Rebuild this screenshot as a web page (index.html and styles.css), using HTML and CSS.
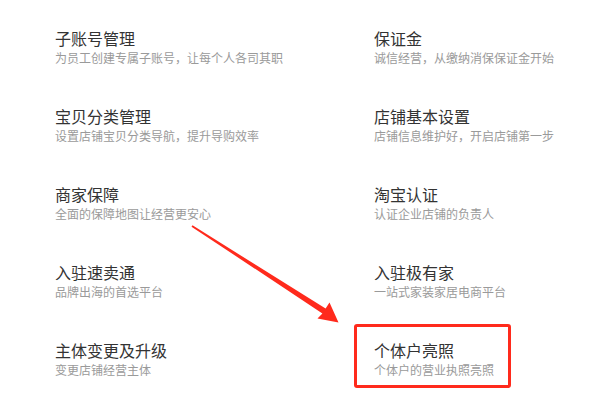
FILE: index.html
```html
<!DOCTYPE html>
<html lang="zh-CN">
<head>
<meta charset="utf-8">
<title>店铺服务</title>
<link rel="stylesheet" href="styles.css">
</head>
<body>
<div class="page">
  <div class="grid">
    <div class="item"><div class="title">子账号管理</div><div class="desc">为员工创建专属子账号，让每个人各司其职</div></div>
    <div class="item"><div class="title">保证金</div><div class="desc">诚信经营，从缴纳消保保证金开始</div></div>
    <div class="item"><div class="title">宝贝分类管理</div><div class="desc">设置店铺宝贝分类导航，提升导购效率</div></div>
    <div class="item"><div class="title">店铺基本设置</div><div class="desc">店铺信息维护好，开启店铺第一步</div></div>
    <div class="item"><div class="title">商家保障</div><div class="desc">全面的保障地图让经营更安心</div></div>
    <div class="item"><div class="title">淘宝认证</div><div class="desc">认证企业店铺的负责人</div></div>
    <div class="item"><div class="title">入驻速卖通</div><div class="desc">品牌出海的首选平台</div></div>
    <div class="item"><div class="title">入驻极有家</div><div class="desc">一站式家装家居电商平台</div></div>
    <div class="item"><div class="title">主体变更及升级</div><div class="desc">变更店铺经营主体</div></div>
    <div class="item highlighted"><div class="title">个体户亮照</div><div class="desc">个体户的营业执照亮照</div></div>
  </div>
  <svg class="arrow" width="600" height="400" viewBox="0 0 600 400">
    <polygon points="192.5,225.3 325.6,308.6 329.5,302.5 338.5,322.5 317.5,318.5 322.4,313.4 191.5,226.7" fill="#ff2a1c"/>
  </svg>
</div>
</body>
</html>
```

FILE: styles.css
```css
html, body {
  margin: 0;
  padding: 0;
  background: #ffffff;
}
body {
  font-family: "Noto Sans CJK SC", "Noto Sans", sans-serif;
  width: 600px;
  height: 400px;
  overflow: hidden;
}
.page {
  position: relative;
  width: 600px;
  height: 400px;
}
.grid {
  display: grid;
  grid-template-columns: 319px 1fr;
  row-gap: 40px;
  padding: 28px 0 0 55px;
}
.item {
  position: relative;
  display: flex;
  flex-direction: column;
  gap: 2px;
}
.title {
  font-size: 16px;
  line-height: 20px;
  color: #333333;
  white-space: nowrap;
}
.desc {
  font-size: 12px;
  line-height: 16px;
  color: #9a9a9a;
  white-space: nowrap;
}
.highlighted::after {
  content: "";
  position: absolute;
  top: -16px;
  left: -20px;
  width: 157px;
  height: 64px;
  box-sizing: border-box;
  border: 3px solid #ff2a1c;
  border-radius: 3px;
}
.arrow {
  position: absolute;
  top: 0;
  left: 0;
  pointer-events: none;
}
```
